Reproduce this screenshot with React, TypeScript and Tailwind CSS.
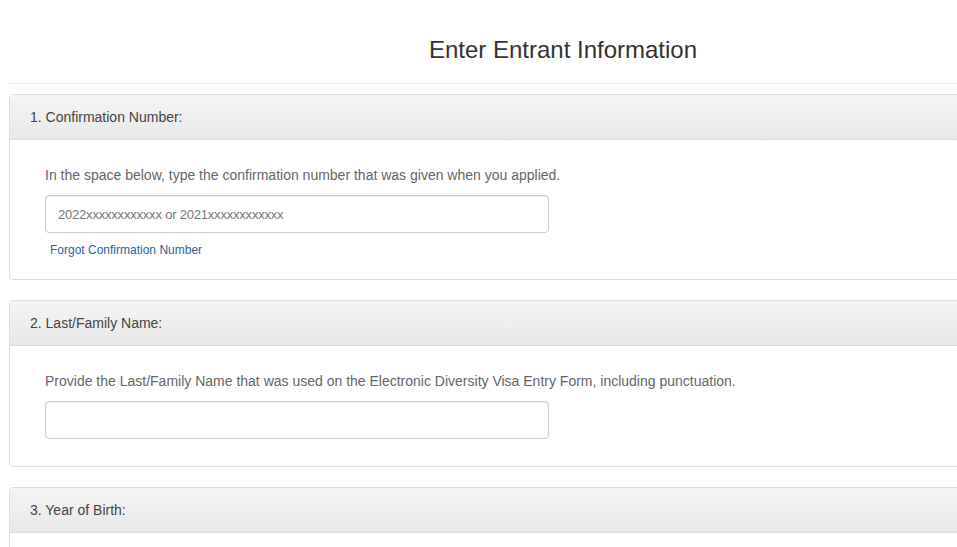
export default function App() {
  return (
    <div
      className="h-[547px] w-[957px] overflow-hidden bg-white text-[14px] text-[#444]"
      style={{ fontFamily: '"Liberation Sans", Arial, sans-serif' }}
    >
      <div className="ml-[9px] w-[1108px]">
        {/* Title */}
        <div className="border-b border-[#eee] pt-[37px] pb-[20px] text-center">
          <h3 className="text-[24px] leading-[26px] text-[#333]">
            Enter Entrant Information
          </h3>
        </div>

        <div className="mt-[10px] flex flex-col gap-[20px]">
          {/* Panel 1 */}
          <div className="rounded-[4px] border border-[#ddd] bg-white">
            <div className="rounded-t-[3px] border-b border-[#ddd] bg-gradient-to-b from-[#f5f5f5] to-[#e8e8e8] px-[20px] py-[12px] leading-[20px]">
              1. Confirmation Number:
            </div>
            <div className="px-[35px] pt-[25px] pb-[20px]">
              <p className="leading-[20px] text-[#666]">
                In the space below, type the confirmation number that was given
                when you applied.
              </p>
              <input
                type="text"
                placeholder="2022xxxxxxxxxxxx or 2021xxxxxxxxxxxx"
                className="mt-[10px] block h-[38px] w-[504px] rounded-[4px] border border-[#ccc] px-[12px] text-[13px] tracking-[-0.2px] text-[#555] placeholder:text-[#777] shadow-[inset_0_1px_1px_rgba(0,0,0,0.075)]"
              />
              <a
                href="#"
                className="mt-[9px] ml-[5px] block text-[12px] leading-[17px] text-[#2a6496]"
              >
                Forgot Confirmation Number
              </a>
            </div>
          </div>

          {/* Panel 2 */}
          <div className="rounded-[4px] border border-[#ddd] bg-white">
            <div className="rounded-t-[3px] border-b border-[#ddd] bg-gradient-to-b from-[#f5f5f5] to-[#e8e8e8] px-[20px] py-[12px] leading-[20px]">
              2. Last/Family Name:
            </div>
            <div className="px-[35px] pt-[25px] pb-[27px]">
              <p className="leading-[20px] text-[#666]">
                Provide the Last/Family Name that was used on the Electronic
                Diversity Visa Entry Form, including punctuation.
              </p>
              <input
                type="text"
                className="mt-[10px] block h-[38px] w-[504px] rounded-[4px] border border-[#ccc] px-[12px] text-[13px] text-[#555] shadow-[inset_0_1px_1px_rgba(0,0,0,0.075)]"
              />
            </div>
          </div>

          {/* Panel 3 */}
          <div className="rounded-[4px] border border-[#ddd] bg-white">
            <div className="rounded-t-[3px] border-b border-[#ddd] bg-gradient-to-b from-[#f5f5f5] to-[#e8e8e8] px-[20px] py-[12px] leading-[20px]">
              3. Year of Birth:
            </div>
            <div className="h-[100px]" />
          </div>
        </div>
      </div>
    </div>
  );
}
